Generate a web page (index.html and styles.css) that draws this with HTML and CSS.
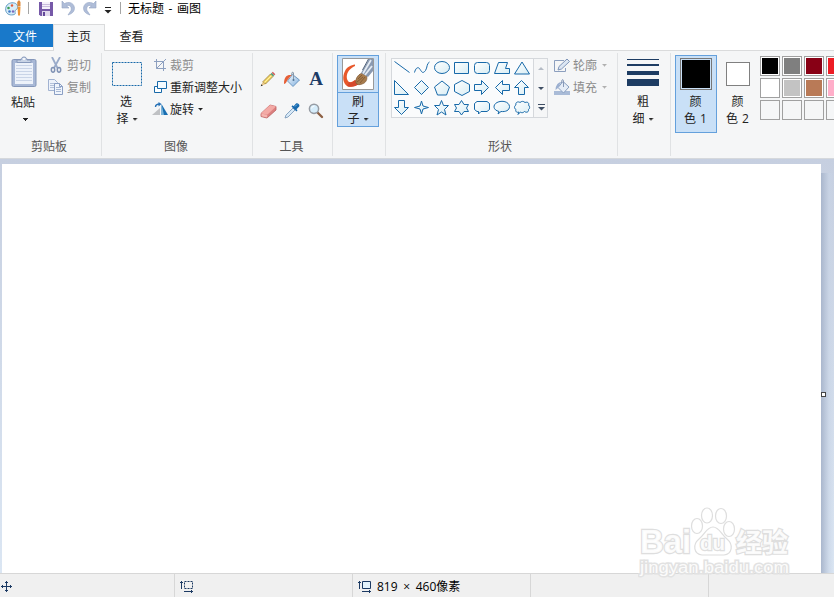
FILE: index.html
```html
<!DOCTYPE html>
<html lang="zh-CN">
<head>
<meta charset="utf-8">
<title>无标题 - 画图</title>
<link rel="stylesheet" href="styles.css">
</head>
<body>
<svg width="0" height="0" class="defs">
  <defs>
    <linearGradient id="blueFill" x1="0" y1="0" x2="1" y2="1"><stop offset="0" stop-color="#fff"/><stop offset="1" stop-color="#d8edf4"/></linearGradient>
    <linearGradient id="steel" x1="0" y1="0" x2="1" y2="1"><stop offset="0" stop-color="#f4f8fc"/><stop offset="1" stop-color="#7fb0e0"/></linearGradient>
  </defs>
</svg>
<header class="titlebar">
  <svg class="app-icon" width="16" height="17" viewBox="0 0 16 17"><path d="M.7 10C.2 6 3 3 7 2.800c4-.2 6 2 5.600 5-.3 2-2 1.500-2.500 3-.5 2.200 1.600 3.200-2 4C4 15.500 1 13.500.7 10z" fill="#d8ecf8" stroke="#649dc4"/><circle cx="3.500" cy="8" r="1.300" fill="#3b9b54"/><circle cx="7" cy="5.500" r="1.200" fill="#e25a38"/><circle cx="4.500" cy="11.500" r="1.300" fill="#3d79c7"/><circle cx="8" cy="11.500" r="1.200" fill="#7b67bb"/><path d="M12.500 7h3l-.5 8.500h-2z" fill="#ef9536"/><path d="M12.500 6.500 12.200 2 14 0l1.500 2v4.500z" fill="#dc8a3d"/></svg>
  <i class="bar bar-a"></i>
  <svg class="save" width="14" height="14" viewBox="0 0 14 14"><path d="M0 0h14v14H1.500L0 12.500z" fill="#7659a8"/><path d="M3 0h8v7H3z" fill="#f4f1fa"/><path d="M3 2.500h8M3 4.500h8" stroke="#c9bddd"/><path d="M3 9h8v5H3z" fill="#e0d9ec"/><path d="M4 10h2v4H4z" fill="#62489a"/></svg>
  <svg class="undo" width="15" height="15" viewBox="0 0 15 15"><path d="M1 0v7h7L5.500 4.800C9 3.500 11 6 10 9.500L7 14c5-1.500 7-4.500 6.300-8C12.300 1.500 7.500.3 3.500 2.600z" fill="#afbdd8" stroke="#93a5c4" stroke-width=".6"/></svg>
  <svg class="redo" width="15" height="15" viewBox="0 0 15 15"><path d="M14 0v7H7l2.500-2.200C6 3.500 4 6 5 9.500L8 14C3 12.500 1 9.500 1.700 6 2.700 1.500 7.500.3 11.500 2.600z" fill="#afbdd8" stroke="#93a5c4" stroke-width=".6"/></svg>
  <svg class="custom" width="8" height="7" viewBox="0 0 8 7"><path d="M1 .5h6" stroke="#222"/><path d="M.5 3h7L4 6.500z" fill="#222"/></svg>
  <i class="bar bar-b"></i>
  <span class="title">无标题 - 画图</span>
</header>
<nav class="tabs"><span class="tab file">文件</span><span class="tab home">主页</span><span class="tab view">查看</span></nav>

<section class="ribbon">
  <div class="group clipboard">
    <div class="tools">
      <div class="big paste">
        <svg width="26" height="32" viewBox="0 0 26 32"><rect x="1" y="3.500" width="24" height="27" rx="1.500" fill="#a8b8d6" stroke="#8496b9"/><path d="M4 7h18v21H4z" fill="#edf2fa"/><path d="M5 9.500h16M5 12.500h16M5 15.500h16M5 18.500h16M5 21.500h16M5 24.500h16" stroke="#c9d4e7"/><path d="M6 6.500V4h4c0-4 6-4 6 0h4v2.500z" fill="#c9d4e6" stroke="#8799bb"/><circle cx="13" cy="3" r="1" fill="#fff"/></svg>
        <span>粘贴</span><i class="arrow"></i>
      </div>
      <div class="rows muted">
        <div class="row"><svg width="16" height="16" viewBox="0 0 16 16"><path d="M4 0 9.500 11M12 0 6 11" stroke="#9aabc9" stroke-width="1.800"/><ellipse cx="5" cy="12.800" rx="1.700" ry="2.400" fill="none" stroke="#8193b5" stroke-width="1.500"/><ellipse cx="11" cy="12.800" rx="1.700" ry="2.400" fill="none" stroke="#8193b5" stroke-width="1.500"/></svg><span>剪切</span></div>
        <div class="row"><svg width="16" height="16" viewBox="0 0 16 16"><path d="M.5.500h6l3 3v8h-9z" fill="#eef3fb" stroke="#a1b2d1"/><path d="M2 4.500h5M2 6.500h5M2 8.500h5" stroke="#b4c2da"/><path d="M6.500 4.500h5l3 3v8h-8z" fill="#f0f5fc" stroke="#8b9fc4"/><path d="M8 8.500h5M8 10.500h5M8 12.500h5" stroke="#a7b8d5"/><path d="M11.500 4.500v3h3" fill="none" stroke="#8b9fc4"/></svg><span>复制</span></div>
      </div>
    </div>
    <div class="label">剪贴板</div>
  </div>
  <div class="group image">
    <div class="tools">
      <div class="big select">
        <svg width="30" height="24" viewBox="0 0 30 24"><path d="M.5.500h29v23H.5z" fill="none" stroke="#1769a9" stroke-dasharray="2 1"/></svg>
        <span>选</span><span class="split">择<i class="arrow"></i></span>
      </div>
      <div class="rows">
        <div class="row muted"><svg width="14" height="14" viewBox="0 0 14 14"><path d="M1 3.500h9.500V13M3.500 1v9.500H13M3.500 10.500 13 1" fill="none" stroke="#8da0c0"/></svg><span>裁剪</span></div>
        <div class="row"><svg width="14" height="14" viewBox="0 0 14 14"><path d="M1.500 6.500h7v6h-7z" fill="#fff" stroke="#1769a9"/><path d="M4.500 1.500h9v7h-9z" fill="#f4fbff" stroke="#1769a9"/></svg><span>重新调整大小</span></div>
        <div class="row"><svg width="16" height="14" viewBox="0 0 16 14"><path d="M0 13 8 6v7z" fill="#bfc1c4"/><path d="M9.500 2 16 13H9.500z" fill="#176db1"/><path d="M9.500 2v11H12z" fill="#79b5dc"/><path d="M3.500 5C3.500 2.500 5 2 8 2" fill="none" stroke="#2671b6" stroke-width="1.400"/><path d="m6.500 0 3 2-3 2.500z" fill="#2671b6"/></svg><span>旋转</span><i class="arrow"></i></div>
      </div>
    </div>
    <div class="label">图像</div>
  </div>
  <div class="group toolset">
    <div class="tool-grid">
      <svg width="16" height="16" viewBox="0 0 16 16"><path d="m1 15 2-5 3 3z" fill="#e9c98b"/><path d="m3 10.500 7.500-7.500 2.500 2.500L5.500 13z" fill="#f2d564" stroke="#8f7131" stroke-width=".7"/><path d="m4.500 11.500 7-7" stroke="#fff1a2"/><path d="m10.500 3 1.300-1.300 2.500 2.500-1.300 1.300z" fill="#55a17d"/><path d="m11.800 1.700 1-1 2.500 2.500-1 1z" fill="#d45858"/><path d="m.7 15.300.8-2 1.300 1.300z" fill="#222"/></svg>
      <svg width="18" height="17" viewBox="0 0 18 17"><path d="m9.500 3.500 7 5.500-6.500 6.500L4.500 10z" fill="url(#steel)" stroke="#5485b5" stroke-width=".8"/><path d="M10.500 9V2Q10 .5 9 1.500L8.500 5" fill="none" stroke="#8798a9"/><path d="M8.500 4C4 3.500 1 5.500 1 13c2 0 2.500-2.500 3.500-4z" fill="#e65f36"/><circle cx="10.500" cy="9" r="1" fill="#527494"/></svg>
      <span class="letter">A</span>
      <svg width="17" height="15" viewBox="0 0 17 15"><path d="M1 9.500 10 1l6 1.500v3.500L7 14l-6-1.500z" fill="#dc8080" stroke="#ba6060" stroke-width=".8"/><path d="M1 9.500 10 1l6 1.500L7.500 10.500z" fill="#f3aaa6"/><path d="m1.500 9.800 5.700 1v2.700l-5.700-1.300z" fill="#f5b5b0"/></svg>
      <svg width="16" height="16" viewBox="0 0 16 16"><path d="m1 15 1-3 7-7 2 2-7 7z" fill="#d7e9f7" stroke="#7192b5" stroke-width=".8"/><path d="m7.500 3.500 5 5 1-1.300-1-1 2.700-2.700c1-2-1.700-4.200-3.400-2.800L9.600 3.200l-1-1z" fill="#1769ae"/><path d="m11 3.500 2-2" stroke="#79b6e5"/></svg>
      <svg width="16" height="16" viewBox="0 0 16 16"><path d="m9 9 5 5" stroke="#8d6044" stroke-width="2.400" stroke-linecap="round"/><circle cx="6" cy="5.800" r="4.600" fill="#d6edfb" stroke="#969ca4" stroke-width="1.500"/><path d="M3.500 5.500Q4 3 6.500 3" fill="none" stroke="#fff"/></svg>
    </div>
    <div class="label">工具</div>
  </div>
  <div class="group brushes">
    <div class="brush">
      <div class="brush-icon"><svg width="32" height="32" viewBox="0 0 32 32"><path d="M.5.500h31v31H.5z" fill="#fff" stroke="#999"/><path d="M13 6.500C9 7 5 9 3 13c-3 6-2 12 2 15 4 2 8 0 12-2l-4-4c-2 1-4 3-6 2C4 22 4 16 7 12.500 9 10 11 9 13 8z" fill="#e8582b"/><path d="M13 22c-1 2-4 3-6 2l-2 4c5 2 9 0 12-2z" fill="#d5492d"/><path d="M14 25c-1-5 3-10 8-10 5 3 3 10-2 11-2 1-5 1-6-1z" fill="#a77c4d" stroke="#805934" stroke-width=".7"/><path d="m15 24 6-5m-3 6 5-6m-7 2 4-4" stroke="#77502c" stroke-width=".7"/><path d="m19 15 8-14h4v12l-5 6z" fill="#8999b1"/><path d="m21 15.500 8-13.500m-6 15 7-9" stroke="#e4ebf3" stroke-width="1.800"/><path d="m26.500 1-6 11" stroke="#53647b"/></svg></div>
      <span>刷</span><span class="split">子<i class="arrow"></i></span>
    </div>
  </div>
  <div class="group shapes">
    <div class="tools">
      <div class="gallery">
        <div class="shape-grid">
          <svg viewBox="0 0 20 20"><path d="m2.500 3.500 15 11"/></svg>
          <svg viewBox="0 0 20 20"><path class="open" d="M2.500 14.500c1-4 3-6 5-4 2 3 3 6 6 2 2-3 1-7 4-8.500"/></svg>
          <svg viewBox="0 0 20 20"><ellipse cx="10" cy="9.500" rx="7.500" ry="6"/></svg>
          <svg viewBox="0 0 20 20"><path d="M2.500 4.500h14v11h-14z"/></svg>
          <svg viewBox="0 0 20 20"><rect x="2.500" y="4.500" width="15" height="11" rx="3"/></svg>
          <svg viewBox="0 0 20 20"><path d="M6.500 4.500h9l-2 6h4v5h-15z"/></svg>
          <svg viewBox="0 0 20 20"><path d="m10 4 7.500 12h-15z"/></svg>
          <svg viewBox="0 0 20 20"><path d="m2.500 2.500 14 14h-14z"/></svg>
          <svg viewBox="0 0 20 20"><path d="m9.500 2.500 7 7-7 7-7-7z"/></svg>
          <svg viewBox="0 0 20 20"><path d="m10 3 7.500 6-3 8h-9l-3-8z"/></svg>
          <svg viewBox="0 0 20 20"><path d="m10 2.500 7.500 4v7l-7.500 4-7.500-4v-7z"/></svg>
          <svg viewBox="0 0 20 20"><path d="M2.500 6.500h7v-4l7 7-7 7v-4h-7z"/></svg>
          <svg viewBox="0 0 20 20"><path d="M17.500 6.500h-7v-4l-7 7 7 7v-4h7z"/></svg>
          <svg viewBox="0 0 20 20"><path d="m9.500 2.500 7 7h-4v7h-6v-7h-4z"/></svg>
          <svg viewBox="0 0 20 20"><path d="m9.500 16.500 7-7h-4v-7h-6v7h-4z"/></svg>
          <svg viewBox="0 0 20 20"><path d="m9.500 3 1.500 5 5.500 1.500L11 11l-1.500 5L8 11 2.500 9.500 8 8z"/></svg>
          <svg viewBox="0 0 20 20"><path d="m9.500 2.500 2 5h5l-4 4 1.500 5.500-4.500-3L5 17l1.500-5.500-4-4h5z"/></svg>
          <svg viewBox="0 0 20 20"><path d="m9.500 2.500 2.500 4h4.500l-2 3.500 2 3.500H12L9.500 17 7 13.500H2.500l2-3.500-2-3.500H7z"/></svg>
          <svg viewBox="0 0 20 20"><path d="M5 3.500h10l2.500 2v6l-2.500 2H9L6.500 16v-2.500H5l-2.500-2v-6z"/></svg>
          <svg viewBox="0 0 20 20"><path d="M7 13.500C1 12 .5 7 5 4.500c5-2.500 12-1 12.500 4 0 4-4 5.500-8.500 5L6 16z"/></svg>
          <svg viewBox="0 0 20 20"><path d="M7 14c-2 1-4-.5-3-2.500-2-1-2-3.500 0-4.500-1-2.500 2-4 4-2.500 1.500-1.500 3.500-1.500 5 0 2.500-1 4.500.5 3.500 2.500 1.500 1.500 1.500 3.500 0 4.500.5 2.500-2 3.500-4 2-1.500 1.500-3 1.500-4 .5L6 16.500z"/></svg>
        </div>
        <div class="scroll">
          <svg viewBox="0 0 14 20"><path d="M4 11h6L7 8z" fill="#b5bbc5"/></svg>
          <svg viewBox="0 0 14 20"><path d="M4 8h6l-3 3z" fill="#3f4e64"/></svg>
          <svg viewBox="0 0 14 20"><path d="M4 5.500h7" stroke="#3f4e64"/><path d="M4 8h7l-3.500 3.500z" fill="#3f4e64"/></svg>
        </div>
      </div>
      <div class="rows muted">
        <div class="row"><svg width="16" height="16" viewBox="0 0 16 16"><path d="M10 3.500H.5v11h11V11" fill="none" stroke="#8c9fbe"/><path d="m4 13 1-3.500L13 2l2.500 2.500L7.500 12z" fill="#dce6f3" stroke="#7f95b9"/></svg><span>轮廓</span><i class="arrow"></i></div>
        <div class="row"><svg width="16" height="16" viewBox="0 0 16 16"><path d="M0 12h16v4H0z" fill="#a9bbd7"/><path d="m9 2.500 6 5.500-5.500 6L4 8.500z" fill="#e6edf7" stroke="#879ec0"/><path d="M8 3Q2 3 1.500 11l2.500-2 2-4z" fill="#9bafd0"/><path d="M9.500 8V1.500Q9 0 8 1l-.5 3" fill="none" stroke="#8799b8"/></svg><span>填充</span><i class="arrow"></i></div>
      </div>
    </div>
    <div class="label">形状</div>
  </div>
  <div class="group thickness">
    <div class="big">
      <div class="weights"><i></i><i></i><i></i><i></i></div>
      <span>粗</span><span class="split">细<i class="arrow"></i></span>
    </div>
  </div>
  <div class="group colors">
    <div class="color one"><i class="chip"></i><span>颜</span><span>色 1</span></div>
    <div class="color two"><i class="chip"></i><span>颜</span><span>色 2</span></div>
    <div class="palette">
      <i class="black"></i><i class="gray"></i><i class="maroon"></i><i class="red"></i>
      <i class="white"></i><i class="silver"></i><i class="brown"></i><i class="pink"></i>
      <i></i><i></i><i></i><i></i>
    </div>
  </div>
</section>

<main class="workspace">
  <div class="canvas"></div>
  <div class="edge"><i class="handle"></i></div>
</main>
<footer class="status">
  <div class="cell position"><svg width="12" height="12" viewBox="0 0 12 12"><path d="M5.500 0v11M0 5.500h11M4 1.500h3M4 9.500h3M1.500 4v3M9.500 4v3" stroke="#1c3a63"/></svg></div>
  <div class="cell"><svg width="14" height="13" viewBox="0 0 14 13"><path d="M1.500 1v8M0 2.500h3M4 11.500h9M11.500 10v3" stroke="#1c3a63"/><path d="M4.500 1.500h8v7h-8z" fill="none" stroke="#1c3a63" stroke-dasharray="2 1"/></svg></div>
  <div class="cell"><svg width="14" height="13" viewBox="0 0 14 13"><path d="M1.500 1v8M0 2.500h3M4 11.500h9M11.500 10v3" stroke="#1c3a63"/><path d="M4.500 1.500h8v7h-8z" fill="#e4f3fb" stroke="#1c3a63"/></svg><span class="dims">819 × 460像素</span></div>
  <div class="cell"></div>
  <div class="cell last"></div>
</footer>
<svg class="watermark" width="160" height="80" viewBox="0 0 160 80">
  <g class="ghost"><text x="2" y="53" font-size="34" textLength="51" lengthAdjust="spacingAndGlyphs">Bai</text>
  <path d="M75 27c-6 0-8 7-14 12-7 6-5 15 3 16h22c8-1 10-10 3-16-6-5-8-12-14-12z"/>
  <ellipse cx="59" cy="26" rx="5.500" ry="7.500"/><ellipse cx="69" cy="15.500" rx="5.500" ry="7.500"/><ellipse cx="83" cy="16" rx="5.500" ry="7.500"/><ellipse cx="91" cy="29" rx="5.500" ry="7.500"/>
  <text x="62" y="50" font-size="21" textLength="25" lengthAdjust="spacingAndGlyphs">du</text>
  <text x="98" y="52" font-size="26" class="cjk">经验</text>
  <text x="2" y="73" font-size="16" class="site" textLength="149" lengthAdjust="spacingAndGlyphs">jingyan.baidu.com</text></g>
</svg>
</body>
</html>
```
FILE: styles.css
```css
* { box-sizing: border-box; }
body {
  margin: 0;
  width: 834px;
  height: 597px;
  overflow: hidden;
  position: relative;
  display: flex;
  flex-direction: column;
  background: #fff;
  color: #222;
  font: 12px/17px "Open Sans", "Noto Sans CJK SC", sans-serif;
}
svg { display: block; flex: none; }
i { display: block; flex: none; font-style: normal; }
span { white-space: nowrap; }
.defs { position: absolute; }

.titlebar { height: 24px; flex: none; display: flex; align-items: flex-start; padding-left: 5px; }
.bar { width: 1px; height: 12px; margin-top: 2px; background: #a5a5a5; }
.bar-a { margin-left: 7px; }
.save { margin: 2px 0 0 10px; }
.undo { margin: 1px 0 0 8px; }
.redo { margin: 1px 0 0 6px; }
.custom { margin: 7px 0 0 7px; }
.bar-b { margin-left: 8px; }
.title { margin-left: 7px; color: #000; word-spacing: 1.5px; }

.tabs { height: 27px; flex: none; display: flex; border-bottom: 1px solid #dadbdc; }
.tab { height: 26px; line-height: 25px; text-align: center; }
.file { width: 53px; height: 23px; padding-right: 3px; background: #1979ca; color: #fff; }
.home { width: 52px; height: 27px; border: 1px solid #dadbdc; border-bottom: 0; background: #f5f6f7; line-height: 23px; }
.view { width: 53px; }

.ribbon { height: 108px; flex: none; display: flex; background: #f5f6f7; border-bottom: 1px solid #d5d8dc; }
.group { position: relative; flex: none; padding: 3px 0; display: flex; flex-direction: column; justify-content: space-between; }
.group::after { content: ""; position: absolute; right: 0; top: 2px; width: 1px; height: 103px; background: #e0e2e4; }
.clipboard { width: 102px; }
.image { width: 151px; }
.toolset { width: 80px; }
.brushes { width: 53px; }
.shapes { width: 232px; }
.thickness { width: 53px; }
.colors { width: 163px; }
.label { height: 17px; text-align: center; color: #555; }
.clipboard .label, .shapes .label { padding-right: 4px; }
.image .label { padding-right: 3px; }
.toolset .label { padding-right: 3px; }
.tools { display: flex; }
.big { display: flex; flex-direction: column; align-items: center; }
.paste { width: 46px; padding-top: 2px; }
.paste svg { margin-left: 2px; }
.paste span { margin-top: 6px; }
.paste .arrow { margin: 7px 0 0 5px; }
.arrow { width: 5px; height: 3px; background: currentColor; clip-path: polygon(0 0, 5px 0, 5px 1px, 4px 1px, 4px 2px, 3px 2px, 3px 3px, 2px 3px, 2px 2px, 1px 2px, 1px 1px, 0 1px); }
.split { display: flex; align-items: center; gap: 4px; }
.split .arrow { margin-top: 1px; }
.select { width: 50px; padding-top: 8px; }
.select span { margin: 7px 2px 0 0; }
.select .split { margin: 0; }
.row { height: 22px; display: flex; align-items: center; gap: 4px; }
.clipboard .row { padding-left: 2px; gap: 3px; }
.image .row svg { width: 16px; }
.image .row { gap: 2px; }
.image .row .arrow { margin-left: 2px; }
.muted { color: #8b8b8b; }

.tool-grid { display: grid; grid-template-columns: repeat(3, 24px); grid-template-rows: repeat(2, 32px); padding: 9px 0 0 3px; place-items: center; }
.letter { font: bold 19px/24px "Liberation Serif", serif; color: #1d3c66; }

.brush { width: 42px; height: 72px; margin: 1px 0 0 4px; border: 1px solid #64a0dc; background: #c9e0f7; display: flex; flex-direction: column; align-items: center; }
.brush-icon { width: 40px; height: 37px; padding: 2px 4px; border-bottom: 1px solid #64a0dc; }

.shapes .tools { padding: 0 0 0 5px; }
.gallery { width: 157px; height: 60px; margin-top: 4px; border: 1px solid #d5d8dc; background: #fafbfc; display: flex; }
.shape-grid { width: 141px; height: 60px; display: grid; grid-template-columns: repeat(7, 20px); grid-auto-rows: 20px; margin-top: -1px; }
.shape-grid svg { width: 20px; height: 20px; fill: url(#blueFill); stroke: #1769a9; stroke-width: 1; }
.shape-grid .open { fill: none; }
.scroll { width: 14px; border-left: 1px solid #d5d8dc; background: #f5f6f7; }
.scroll svg { width: 14px; height: 20px; }
.shapes .rows { padding-left: 6px; }
.shapes .row { gap: 3px; }
.shapes .row .arrow { margin-left: 2px; color: #b0b0b0; }

.thickness .big { width: 50px; padding-top: 5px; }
.weights { width: 32px; margin-bottom: 7px; }
.weights i { height: 1px; margin-bottom: 4px; background: #1d3c63; }
.weights i:nth-child(2) { height: 2px; margin-bottom: 5px; }
.weights i:nth-child(3) { height: 4px; margin-bottom: 4px; }
.weights i:nth-child(4) { height: 7px; margin: 0; }

.group.colors { flex-direction: row; justify-content: flex-start; padding: 4px 0 0 4px; overflow: hidden; }
.colors::after { display: none; }
.color { width: 42px; height: 78px; flex: none; display: flex; flex-direction: column; align-items: center; word-spacing: 1px; }
.color span { margin-right: 1px; }
.one { background: #c9e0f7; border: 1px solid #64a0dc; }
.chip { border: 1px solid #808080; background: #fff; }
.one .chip { width: 32px; height: 32px; margin: 2px 0 3px; background: #000; border-color: #777; box-shadow: inset 0 0 0 1px #c9e0f7; }
.two .chip { width: 24px; height: 24px; margin: 7px 0 7px; }
.palette { display: grid; grid-template-columns: repeat(4, 20px); grid-auto-rows: 20px; gap: 2px; padding: 1px 0 0 1px; }
.palette i { border: 1px solid #a0a0a0; }
.palette i:nth-child(-n+8) { box-shadow: inset 0 0 0 1px #fff; }
.black { background: #000; }
.gray { background: #7f7f7f; }
.maroon { background: #880015; }
.red { background: #ed1c24; }
.white { background: #fff; }
.silver { background: #c3c3c3; }
.brown { background: #b97a57; }
.pink { background: #ffaec9; }

.workspace { flex: 1; display: flex; padding: 5px 0 0 2px; background: linear-gradient(#c6cfe0, #dbe6f3); }
.canvas { width: 819px; background: #fff; }
.edge { width: 13px; margin-top: 9px; padding-top: 219px; background: linear-gradient(90deg, #aab7cd, rgba(200, 212, 230, .6) 8px, transparent); }
.handle { width: 5px; height: 5px; border: 1px solid #444; background: #fff; }

.status { height: 24px; flex: none; display: flex; border-top: 1px solid #d7d7d7; background: #f0f0f0; color: #111; }
.cell { width: 178px; display: flex; align-items: center; padding: 2px 0 0 5px; border-right: 1px solid #d7d7d7; }
.position { width: 175px; padding-left: 1px; }
.last { flex: 1; border: 0; }
.dims { margin-left: 5px; color: #000; word-spacing: 2.5px; }

/* Translucent site mark lying over the canvas corner. */
.watermark { position: absolute; left: 638px; top: 500px; }
.ghost { fill: #fff; fill-opacity: .9; stroke: #dedede; stroke-width: 1.2; font-family: "Liberation Sans", sans-serif; font-weight: bold; }
.ghost text { paint-order: stroke; stroke-width: 2.4; }
.ghost .site { font-weight: normal; stroke: #e2e2e2; stroke-width: 2.8; }
.cjk { font-family: "Noto Sans CJK SC", sans-serif; }
```
